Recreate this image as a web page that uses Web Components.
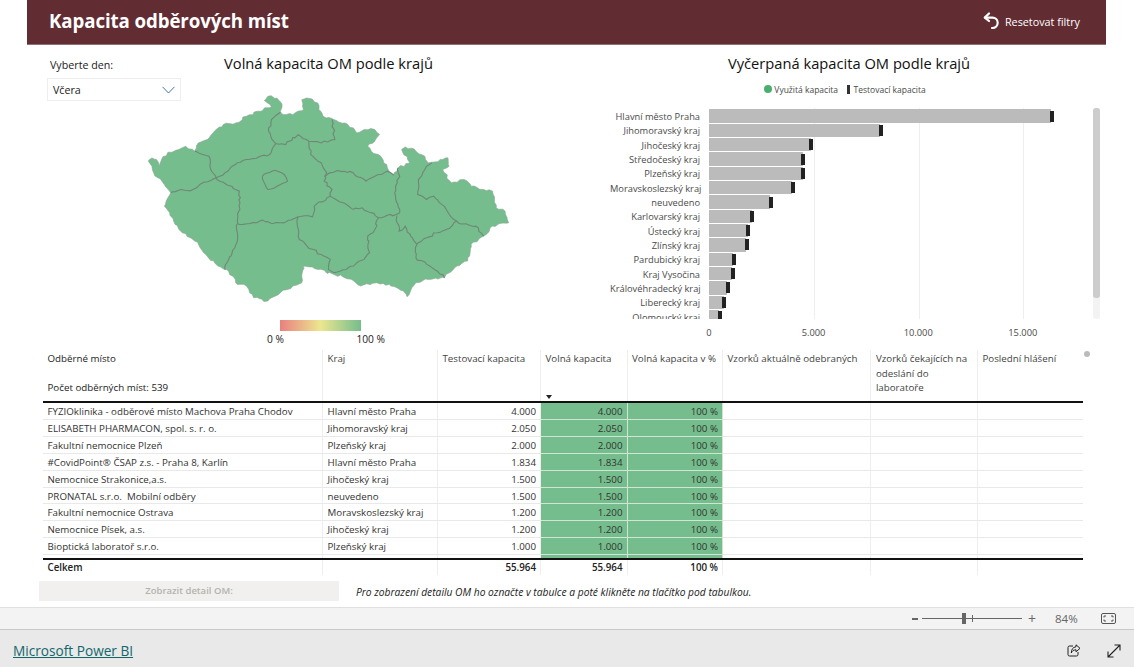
<!DOCTYPE html>
<html lang="cs">
<head>
<meta charset="utf-8">
<title>Kapacita odběrových míst</title>
<style>
  html, body { margin: 0; padding: 0; background: #fff; }
  body {
    width: 1134px;
    height: 667px;
    overflow: hidden;
    display: flex;
    flex-direction: column;
    font-family: "Open Sans", "Noto Sans", sans-serif;
    color: #333;
  }
</style>
</head>
<body>
  <pbi-report>
    <pbi-header slot="header">Kapacita odběrových míst</pbi-header>
    <pbi-map slot="map" heading="Volná kapacita OM podle krajů"></pbi-map>
    <pbi-slicer slot="map" label="Vyberte den:" value="Včera"></pbi-slicer>
    <pbi-bars slot="chart" heading="Vyčerpaná kapacita OM podle krajů"></pbi-bars>
    <pbi-table slot="table"></pbi-table>
    <pbi-detail slot="detail">Pro zobrazení detailu OM ho označte v tabulce a poté klikněte na tlačítko pod tabulkou.</pbi-detail>
  </pbi-report>
  <pbi-zoombar></pbi-zoombar>
  <pbi-footer></pbi-footer>

<script>
function el(html) {
  const t = document.createElement("template");
  t.innerHTML = html;
  return t;
}

class PbiElement extends HTMLElement {
  constructor() {
    super();
    this.attachShadow({ mode: "open" });
    this.shadowRoot.appendChild(this.constructor.template.content.cloneNode(true));
  }
}

class PbiReport extends PbiElement {
  static template = el(`
    <style>
      :host { display: flex; flex-direction: column; width: 1079px; height: 607px; margin-left: 27px; flex: none; }
      .top { display: flex; height: 305px; flex: none; }
      .left { display: grid; width: 563px; margin-left: 20px; flex: none; }
      .right { width: 490px; flex: none; }
      ::slotted([slot="map"]) { grid-area: 1 / 1; }
    </style>
    <slot name="header"></slot>
    <div class="top">
      <div class="left"><slot name="map"></slot></div>
      <div class="right"><slot name="chart"></slot></div>
    </div>
    <slot name="table"></slot>
    <slot name="detail"></slot>
  `);
}

class PbiHeader extends PbiElement {
  static template = el(`
    <style>
      :host { display: flex; align-items: center; justify-content: space-between; height: 44px; flex: none; box-sizing: content-box;
        background: #622c33; border-bottom: 1px solid #8f7074; color: #fff; padding: 0 26px 0 22px; }
      h1 { margin: -3px 0 0; font-size: 18.7px; font-weight: 700; letter-spacing: -.1px; }
      .reset { display: flex; align-items: center; gap: 6px; font-size: 10.8px; margin-top: -2px; }
      svg { display: block; }
    </style>
    <h1><slot></slot></h1>
    <div class="reset">
      <svg width="16" height="18" viewBox="0 0 16 18" fill="none" stroke="#fff" stroke-width="2.2" stroke-linecap="round" stroke-linejoin="round">
        <path d="M6 1.5 1.8 5.6 6 9"/><path d="M2.2 5.6H9.5a4.8 4.8 0 0 1 0 10.4H9"/>
      </svg>
      <span>Resetovat filtry</span>
    </div>
  `);
}

class PbiSlicer extends PbiElement {
  static template = el(`
    <style>
      :host { display: block; justify-self: start; align-self: start; width: 134px; margin-top: 13px; position: relative; font-size: 10.7px; color: #222; }
      .label { padding-left: 3px; height: 20px; line-height: 14px; }
      .box { display: flex; align-items: center; justify-content: space-between; height: 23px; box-sizing: border-box;
        border: 1px solid #eee; padding: 1px 5px 0 5px; background: #fff; }
      svg { display: block; }
    </style>
    <div class="label"></div>
    <div class="box">
      <span class="value"></span>
      <svg width="13" height="8" viewBox="0 0 13 8" fill="none" stroke="#3f78ad" stroke-width="1"><path d="M.5 .8 6.5 7 12.5 .8"/></svg>
    </div>
  `);
  connectedCallback() {
    this.shadowRoot.querySelector(".label").textContent = this.getAttribute("label");
    this.shadowRoot.querySelector(".value").textContent = this.getAttribute("value");
  }
}

// outline and region borders traced off the report, x and y in crop units
const CZ_OUTLINE = [[415,485],[425,475],[438,480],[445,500],[452,480],[470,458],[500,450],[520,440],[545,455],[555,430],[580,420],[600,395],[625,375],[660,370],[690,350],[720,335],[760,322],[740,302],[750,290],[775,295],[790,315],[785,335],[795,345],[820,345],[850,330],[845,300],[870,297],[890,310],[893,330],[905,350],[935,360],[965,370],[990,385],[1000,400],[1020,390],[1050,390],[1063,405],[1050,425],[1030,440],[1040,455],[1060,465],[1075,490],[1090,515],[1103,527],[1115,505],[1148,490],[1125,450],[1135,442],[1165,455],[1190,470],[1200,490],[1240,480],[1255,475],[1258,500],[1240,510],[1265,550],[1300,540],[1320,560],[1380,575],[1390,625],[1415,635],[1425,670],[1380,680],[1355,710],[1320,735],[1310,785],[1280,800],[1245,835],[1200,840],[1165,850],[1140,892],[1130,875],[1095,860],[1055,850],[1010,860],[985,840],[935,825],[890,810],[850,800],[845,850],[820,860],[785,880],[750,905],[710,895],[690,860],[660,850],[640,815],[610,800],[570,760],[545,725],[510,700],[490,675],[475,640],[460,620],[478,580],[450,540],[430,520],[425,500]];
const CZ_BORDERS = [
  [[785,338],[760,360],[752,395],[772,432],[800,435],[835,405],[865,425],[900,430],[938,420],[930,360]],
  [[772,432],[755,465],[690,480],[650,500],[615,530],[605,535]],
  [[545,455],[585,470],[590,510],[605,535]],
  [[478,580],[500,572],[540,570],[570,548],[605,535]],
  [[605,535],[625,548],[670,575],[672,610],[665,672]],
  [[665,672],[700,672],[735,662],[765,672],[800,668],[835,652]],
  [[665,672],[665,720],[650,760],[635,790],[630,812]],
  [[835,652],[875,652],[880,620],[925,590]],
  [[925,590],[930,570],[908,545],[915,520],[900,490],[870,465],[865,425]],
  [[908,530],[940,515],[965,515],[990,520],[1025,545],[1050,530],[1085,515],[1103,527]],
  [[1115,505],[1120,530],[1108,560],[1108,590],[1120,640]],
  [[925,590],[960,610],[990,630],[1015,625],[1060,655],[1110,645],[1120,640]],
  [[835,652],[835,710],[860,740],[900,765],[925,780],[920,810],[935,820]],
  [[1060,655],[1050,690],[1030,710],[1035,760],[1020,780],[975,805],[935,820]],
  [[1112,648],[1118,695],[1135,680],[1150,710],[1168,735]],
  [[1168,735],[1165,775],[1195,795],[1225,815],[1245,835]],
  [[1168,735],[1195,715],[1225,700],[1250,690],[1280,665]],
  [[1280,665],[1250,630],[1215,590],[1195,600],[1170,585],[1172,540],[1190,510],[1210,490]],
  [[1280,665],[1310,675],[1340,685],[1355,710]],
  [[735,530],[770,512],[790,520],[805,545],[785,555],[750,570],[740,550],[735,530]]
];

// breaks long segments up so the borders wobble like the real ones
function rough(points, seed) {
  let s = seed;
  const next = () => (s = (s * 16807) % 2147483647) / 2147483647 - 0.5;
  const out = [points[0]];
  for (let i = 1; i < points.length; i++) {
    const [ax, ay] = points[i - 1];
    const [bx, by] = points[i];
    const n = Math.max(1, Math.round(Math.hypot(bx - ax, by - ay) / 9));
    for (let j = 1; j < n; j++) {
      out.push([ax + (bx - ax) * j / n + next() * 7, ay + (by - ay) * j / n + next() * 7]);
    }
    out.push([bx, by]);
  }
  return "M" + out.map((p) => p[0].toFixed(1) + " " + p[1].toFixed(1)).join("L");
}

class PbiMap extends PbiElement {
  static template = el(`
    <style>
      :host { display: flex; flex-direction: column; align-items: center; }
      h2 { margin: 8px 0 20px; height: 20px; line-height: 20px; font-size: 14.7px; font-weight: 400; color: #111; }
      svg { display: block; width: 371px; height: 213px; flex: none; }
      .scale { margin: 14px 0 0 -16px; width: 110px; display: flex; flex-direction: column; align-items: center; }
      .ramp { width: 81px; height: 11px; background: linear-gradient(90deg, #e98080, #ece78f 50%, #75bd8c); }
      .ticks { width: 118px; flex: none; display: flex; justify-content: space-between; font-size: 10.2px; color: #222; margin: 2px 0 0 11px; line-height: 13px; }
    </style>
    <h2></h2>
    <svg viewBox="400 280 1040 640" preserveAspectRatio="none">
      <path class="land" fill="#75bd8c" stroke="#8aa693" stroke-width=".6" vector-effect="non-scaling-stroke"/>
      <g class="lines" fill="none" stroke="#6f8776" stroke-width="1.1"></g>
    </svg>
    <div class="scale">
      <div class="ramp"></div>
      <div class="ticks"><span>0 %</span><span>100 %</span></div>
    </div>
  `);
  connectedCallback() {
    const root = this.shadowRoot;
    root.querySelector("h2").textContent = this.getAttribute("heading");
    root.querySelector(".land").setAttribute("d", rough(CZ_OUTLINE, 4711) + "Z");
    root.querySelector(".lines").innerHTML = CZ_BORDERS.map((b, i) =>
      `<path d="${rough(b, 97 + i * 131)}" vector-effect="non-scaling-stroke"/>`).join("");
  }
}

const BAR_ROWS = [
  ["Hlavní město Praha", 16350], ["Jihomoravský kraj", 8190], ["Jihočeský kraj", 4870],
  ["Středočeský kraj", 4480], ["Plzeňský kraj", 4480], ["Moravskoslezský kraj", 3970],
  ["neuvedeno", 2920], ["Karlovarský kraj", 2050], ["Ústecký kraj", 1840], ["Zlínský kraj", 1770],
  ["Pardubický kraj", 1150], ["Kraj Vysočina", 1120], ["Královéhradecký kraj", 875],
  ["Liberecký kraj", 700], ["Olomoucký kraj", 490]
];

class PbiBars extends PbiElement {
  static template = el(`
    <style>
      :host { display: block; font-size: 9.3px; color: #4a4a4a; }
      h2 { margin: 8px 0 0; padding-right: 12px; text-align: center; height: 20px; line-height: 20px; font-size: 14.7px; font-weight: 400; color: #111; }
      .legend { display: flex; align-items: center; justify-content: center; height: 14px; margin: 9px 20px 12px 0; font-size: 8.5px; }
      .dot { width: 8px; height: 8px; border-radius: 50%; background: #4aaf6e; margin-right: 2px; }
      .tick { width: 2.5px; height: 9px; background: #333; margin: 0 4px 0 9px; }
      .body { display: flex; }
      .plot { width: 476px; height: 211px; overflow: hidden; flex: none;
        background-image: linear-gradient(#eee, #eee), linear-gradient(#eee, #eee), linear-gradient(#eee, #eee);
        background-size: 1px 100%; background-repeat: no-repeat;
        background-position: 204px 0, 309px 0, 413px 0; }
      .row { display: grid; grid-template-columns: 90px 1fr; column-gap: 9px; height: 14.33px; align-items: center; }
      .name { text-align: right; white-space: nowrap; line-height: 14px; margin-top: 2px; }
      .bar { height: 13.3px; background: #bbb; position: relative; }
      .bar::after { content: ""; position: absolute; right: -2.5px; top: 1.2px; width: 4px; height: 11px; background: #222; }
      .rail { width: 7px; height: 211px; margin-left: 7px; background: #f3f3f3; border-radius: 3px; flex: none; }
      .thumb { height: 190px; background: #ccc; border-radius: 3px; }
      .axis { display: flex; margin: 7px 0 0 99px; height: 13px; line-height: 13px; }
      .axis span { width: 104.6px; transform: translateX(-50%); text-align: center; flex: none; }
    </style>
    <h2></h2>
    <div class="legend">
      <span class="dot"></span><span>Využitá kapacita</span>
      <span class="tick"></span><span>Testovací kapacita</span>
    </div>
    <div class="body">
      <div class="plot"></div>
      <div class="rail"><div class="thumb"></div></div>
    </div>
    <div class="axis"><span>0</span><span>5.000</span><span>10.000</span><span>15.000</span></div>
  `);
  connectedCallback() {
    this.shadowRoot.querySelector("h2").textContent = this.getAttribute("heading");
    this.shadowRoot.querySelector(".plot").innerHTML = BAR_ROWS.map(([name, v]) =>
      `<div class="row"><span class="name">${name}</span><div><div class="bar" style="width:${(v * 0.02092).toFixed(1)}px"></div></div></div>`
    ).join("");
  }
}

const TABLE_ROWS = [
  ["FYZIOklinika - odběrové místo Machova Praha Chodov", "Hlavní město Praha", "4.000"],
  ["ELISABETH PHARMACON, spol. s. r. o.", "Jihomoravský kraj", "2.050"],
  ["Fakultní nemocnice Plzeň", "Plzeňský kraj", "2.000"],
  ["#CovidPoint® ČSAP z.s. - Praha 8, Karlín", "Hlavní město Praha", "1.834"],
  ["Nemocnice Strakonice,a.s.", "Jihočeský kraj", "1.500"],
  ["PRONATAL s.r.o.  Mobilní odběry", "neuvedeno", "1.500"],
  ["Fakultní nemocnice Ostrava", "Moravskoslezský kraj", "1.200"],
  ["Nemocnice Písek, a.s.", "Jihočeský kraj", "1.200"],
  ["Bioptická laboratoř s.r.o.", "Plzeňský kraj", "1.000"]
];

class PbiTable extends PbiElement {
  static template = el(`
    <style>
      :host { display: flex; height: 225px; flex: none; margin-left: 16px; font-size: 9.75px; color: #333; }
      .table { width: 1040px; flex: none; }
      .row { display: grid; grid-template-columns: 280px 115px 103px 86.5px 95.5px 148.4px 106.6px 105px; }
      .cell { box-sizing: border-box; border-right: 1px solid #eee; padding: 0 4px 0 4.5px; white-space: pre; overflow: hidden; }
      .cell:last-child { border-right: 0; }
      .head { height: 53px; border-bottom: 2px solid #111; box-sizing: border-box; }
      .head .cell { padding-top: 2px; line-height: 14.5px; white-space: normal; position: relative; color: #444; }
      .head .first { color: #222; }
      .arrow { position: absolute; left: 5px; bottom: 2px; width: 0; height: 0;
        border: 3.5px solid transparent; border-top: 4px solid #222; border-bottom: 0; }
      .data { height: 17px; line-height: 16px; }
      .data:nth-child(7) { height: 16px; line-height: 15px; }
      .data .cell { border-bottom: 1px solid #e9e9e9; padding-top: .6px; }
      .num { text-align: right; }
      .green { background: #75bd8c; border-right-color: #cfe6d6 !important; border-bottom-color: #cfe6d6 !important; }
      .strip { height: 3px; }
      .strip .cell { padding: 0; }
      .total { height: 17px; border-top: 2px solid #111; box-sizing: border-box; line-height: 15px; font-weight: 600; color: #222; }
      .total .cell { height: 15px; }
      .dot { width: 6px; height: 6px; border-radius: 50%; background: #bbb; margin: 1px 0 0 1px; }
    </style>
    <div class="table"></div>
    <div class="dot"></div>
  `);
  connectedCallback() {
    const empties = `<div class="cell"></div><div class="cell"></div><div class="cell"></div>`;
    const rows = TABLE_ROWS.map(([place, region, cap]) => `
      <div class="row data">
        <div class="cell">${place}</div><div class="cell">${region}</div>
        <div class="cell num">${cap}</div><div class="cell num green">${cap}</div>
        <div class="cell num green">100 %</div>${empties}
      </div>`).join("");
    this.shadowRoot.querySelector(".table").innerHTML = `
      <div class="row head">
        <div class="cell first">Odběrné místo<br><br>Počet odběrných míst: 539</div>
        <div class="cell">Kraj</div>
        <div class="cell">Testovací kapacita</div>
        <div class="cell">Volná kapacita<span class="arrow"></span></div>
        <div class="cell">Volná kapacita v %</div>
        <div class="cell">Vzorků aktuálně odebraných</div>
        <div class="cell">Vzorků čekajících na odeslání do laboratoře</div>
        <div class="cell">Poslední hlášení</div>
      </div>
      ${rows}
      <div class="row strip">
        <div class="cell"></div><div class="cell"></div><div class="cell"></div>
        <div class="cell green"></div><div class="cell green"></div>${empties}
      </div>
      <div class="row total">
        <div class="cell">Celkem</div><div class="cell"></div>
        <div class="cell num">55.964</div><div class="cell num">55.964</div>
        <div class="cell num">100 %</div>${empties}
      </div>`;
  }
}

class PbiDetail extends PbiElement {
  static template = el(`
    <style>
      :host { display: flex; align-items: center; height: 20px; margin: 6px 0 0 12px; flex: none; gap: 17px; }
      .btn { width: 300px; height: 20px; line-height: 20px; text-align: center; background: #f1f0ee; color: #b4b2ae; font-size: 9.5px; font-weight: 600; flex: none; }
      .note { font-size: 10.25px; font-style: italic; color: #222; white-space: nowrap; margin-top: 1px; }
    </style>
    <div class="btn">Zobrazit detail OM:</div>
    <div class="note"><slot></slot></div>
  `);
}

class PbiZoombar extends PbiElement {
  static template = el(`
    <style>
      :host { display: flex; align-items: center; height: 23px; flex: none; box-sizing: border-box;
        background: #f3f3f3; border-top: 1px solid #e0e0e0; border-bottom: 1px solid #c8c8c8; padding-left: 912px; color: #666; }
      .minus { width: 6px; height: 2px; background: #666; }
      .track { width: 100px; height: 1px; background: #666; margin-left: 4px; display: flex; align-items: center; position: relative; }
      .thumb { position: absolute; left: 40px; top: -5px; width: 4px; height: 11px; background: #666; }
      .mark { position: absolute; left: 50px; top: -3px; width: 1px; height: 7px; background: #666; }
      .plus { margin-left: 5px; font-size: 14px; line-height: 14px; width: 10px; text-align: center; }
      .pct { margin-left: 18px; font-size: 11.5px; width: 30px; }
      svg { display: block; margin-left: 16px; }
    </style>
    <span class="minus"></span>
    <div class="track"><span class="mark"></span><span class="thumb"></span></div>
    <span class="plus">+</span>
    <span class="pct">84%</span>
    <svg width="15" height="11" viewBox="0 0 15 11" fill="none" stroke="#555" stroke-width="1">
      <rect x=".5" y=".5" width="14" height="10" rx="1.5"/>
      <path d="M3 4.5V3H5M10 3H12V4.5M12 6.5V8H10M5 8H3V6.5"/>
    </svg>
  `);
}

class PbiFooter extends PbiElement {
  static template = el(`
    <style>
      :host { display: flex; align-items: center; flex: 1; background: #e9e9e9; padding: 4px 0 0 13px; }
      a { color: #12676b; font-size: 13.65px; text-decoration: underline; }
      .icons { margin-left: auto; display: flex; align-items: center; gap: 26px; padding-right: 13px; }
      svg { display: block; }
    </style>
    <a href="#">Microsoft Power BI</a>
    <div class="icons">
      <svg width="14" height="13" viewBox="0 0 14 13" fill="none" stroke="#222" stroke-width="1">
        <path d="M6 2H2.5A1.5 1.5 0 0 0 1 3.5V10.5A1.5 1.5 0 0 0 2.5 12H9.5A1.5 1.5 0 0 0 11 10.5V8"/>
        <path d="M9 .8 13 4.3 9 7.8V5.8C6.5 5.8 5 7 4.3 9 4.3 5.5 6 3 9 2.8Z"/>
      </svg>
      <svg width="14" height="14" viewBox="0 0 14 14" fill="none" stroke="#222" stroke-width="1.1">
        <path d="M1 13 13 1M7.5 1H13V6.5M1 7.5V13H6.5"/>
      </svg>
    </div>
  `);
}

customElements.define("pbi-report", PbiReport);
customElements.define("pbi-header", PbiHeader);
customElements.define("pbi-slicer", PbiSlicer);
customElements.define("pbi-map", PbiMap);
customElements.define("pbi-bars", PbiBars);
customElements.define("pbi-table", PbiTable);
customElements.define("pbi-detail", PbiDetail);
customElements.define("pbi-zoombar", PbiZoombar);
customElements.define("pbi-footer", PbiFooter);
</script>
</body>
</html>
